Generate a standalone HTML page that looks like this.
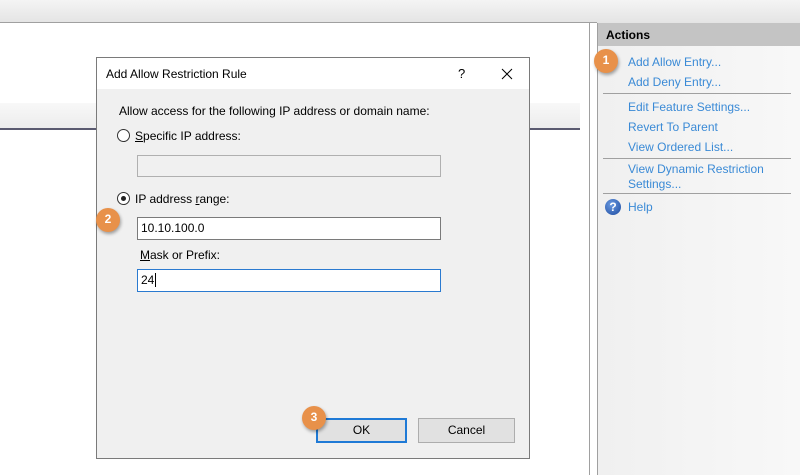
<!DOCTYPE html>
<html><head><style>
*{margin:0;padding:0;box-sizing:border-box}
body{width:800px;height:475px;position:relative;overflow:hidden;background:#fff;font-family:"Liberation Sans",sans-serif;font-size:12px;color:#000}
.a{position:absolute}
.badge{position:absolute;width:24px;height:24px;border-radius:50%;background:#e8914a;color:#fff;font-weight:bold;font-size:12px;text-align:center;line-height:22px;box-shadow:1px 2px 3px rgba(0,0,0,.35)}
.link{position:absolute;left:628px;color:#3a8ad6;font-size:12px}
.sep{position:absolute;left:603px;width:188px;height:1px;background:#a0a0a0}
.inp{position:absolute;background:#fff;border:1px solid #7a7a7a;font-size:12px;padding-left:3px;line-height:20px}
</style></head><body>
<div class="a" style="left:0;top:0;width:800px;height:23px;background:linear-gradient(#f4f4f4,#e4e4e4)"></div>
<div class="a" style="left:0;top:22px;width:597px;height:1px;background:#a0a0a0"></div>
<div class="a" style="left:589px;top:23px;width:1px;height:452px;background:#a0a0a0"></div>
<div class="a" style="left:0;top:103px;width:580px;height:26px;background:linear-gradient(#f8f8f8,#ececec)"></div>
<div class="a" style="left:0;top:128px;width:580px;height:2px;background:#5a5a70"></div>
<div class="a" style="left:597px;top:23px;width:203px;height:452px;background:linear-gradient(90deg,#f0f0f0,#f8f8f8);border-left:1px solid #a0a0a0"></div>
<div class="a" style="left:598px;top:23px;width:202px;height:23px;background:#c4c4c4;font-weight:bold;font-size:12px;line-height:24px;padding-left:8px">Actions</div>
<div class="badge" style="left:594px;top:49px">1</div>
<div class="link" style="top:55px">Add Allow Entry...</div>
<div class="link" style="top:75px">Add Deny Entry...</div>
<div class="sep" style="top:93px"></div>
<div class="link" style="top:100px">Edit Feature Settings...</div>
<div class="link" style="top:120px">Revert To Parent</div>
<div class="link" style="top:140px">View Ordered List...</div>
<div class="sep" style="top:158px"></div>
<div class="link" style="top:162px;line-height:15px">View Dynamic Restriction<br>Settings...</div>
<div class="sep" style="top:193px"></div>
<div class="a" style="left:605px;top:199px;width:16px;height:16px;border-radius:50%;background:radial-gradient(circle at 40% 35%,#6a9ae0,#1c4aa0);color:#fff;font-weight:bold;font-size:12px;text-align:center;line-height:16px">?</div>
<div class="link" style="top:200px">Help</div>

<div class="a" style="left:96px;top:57px;width:434px;height:402px;background:#f0f0f0;border:1px solid #7a7a7a">
 <div class="a" style="left:0;top:0;width:432px;height:31px;background:#fff"></div>
 <div class="a" style="left:9px;top:9px;font-size:12px">Add Allow Restriction Rule</div>
 <div class="a" style="left:361px;top:8px;font-size:13px">?</div>
 <svg class="a" style="left:404px;top:10px" width="12" height="12" viewBox="0 0 12 12"><path d="M1 1L11 11M11 1L1 11" stroke="#000" stroke-width="1"/></svg>
 <div class="a" style="left:22px;top:46px">Allow access for the following IP address or domain name:</div>
 <div class="a" style="left:20px;top:71px;width:13px;height:13px;border:1px solid #333;border-radius:50%;background:#fff"></div>
 <div class="a" style="left:38px;top:71px"><u>S</u>pecific IP address:</div>
 <div class="a" style="left:40px;top:97px;width:304px;height:22px;background:#f0f0f0;border:1px solid #b0b0b0"></div>
 <div class="a" style="left:20px;top:134px;width:13px;height:13px;border:1px solid #333;border-radius:50%;background:#fff"><div class="a" style="left:3px;top:3px;width:5px;height:5px;border-radius:50%;background:#222"></div></div>
 <div class="a" style="left:38px;top:134px">IP address <u>r</u>ange:</div>
 <div class="inp" style="left:40px;top:159px;width:304px;height:23px">10.10.100.0</div>
 <div class="a" style="left:43px;top:190px"><u>M</u>ask or Prefix:</div>
 <div class="inp" style="left:40px;top:211px;width:304px;height:23px;border-color:#2a7ad0">24<span style="border-left:1px solid #000;margin-left:1px"></span></div>
 <div class="a" style="left:219px;top:360px;width:91px;height:25px;border:2px solid #1f7ad6;background:#e1e1e1;text-align:center;line-height:21px">OK</div>
 <div class="a" style="left:321px;top:360px;width:97px;height:25px;border:1px solid #adadad;background:#e1e1e1;text-align:center;line-height:23px">Cancel</div>
</div>
<div class="badge" style="left:96px;top:208px">2</div>
<div class="badge" style="left:302px;top:406px">3</div>
</body></html>
